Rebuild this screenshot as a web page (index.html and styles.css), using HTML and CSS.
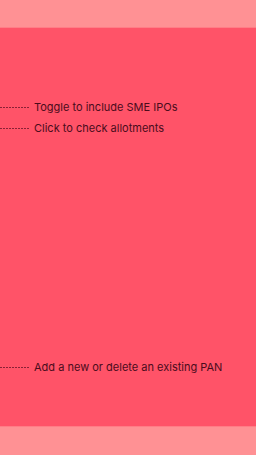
FILE: index.html
```html
<!DOCTYPE html>
<html>
<head>
<meta charset="utf-8">
<link rel="stylesheet" href="styles.css">
</head>
<body>
<div class="top"></div>
<div class="main">
  <div class="hint hint-first"><span class="dash"></span><span class="label">Toggle to include SME IPOs</span></div>
  <div class="hint hint-second"><span class="dash"></span><span class="label">Click to check allotments</span></div>
  <div class="hint hint-last"><span class="dash"></span><span class="label">Add a new or delete an existing PAN</span></div>
</div>
<div class="bottom"></div>
</body>
</html>
```
FILE: styles.css
```css
html, body {
  margin: 0;
  padding: 0;
  width: 256px;
  height: 455px;
  overflow: hidden;
  background: #ff9194;
  font-family: Inter, "Noto Sans", sans-serif;
}
.top {
  height: 28px;
  background: #ff9194;
  border-bottom: 1px solid #ff7d86;
  box-sizing: border-box;
}
.main {
  height: 398px;
  background: #ff5368;
  display: flex;
  flex-direction: column;
  box-sizing: border-box;
  padding-top: 70px;
}
.bottom {
  height: 29px;
  background: #ff9194;
  border-top: 1px solid #ff7d86;
  box-sizing: border-box;
}
.hint {
  display: flex;
  align-items: center;
  height: 18px;
  font-size: 11px;
  color: #4a0c1c;
  letter-spacing: 0;
}
.hint-second {
  margin-top: 3px;
}
.hint-last {
  margin-top: 221px;
}
.dash {
  width: 29px;
  margin-right: 5px;
  height: 1px;
  background: repeating-linear-gradient(to right, #8a2236 0 2px, transparent 2px 3px);
}
```
